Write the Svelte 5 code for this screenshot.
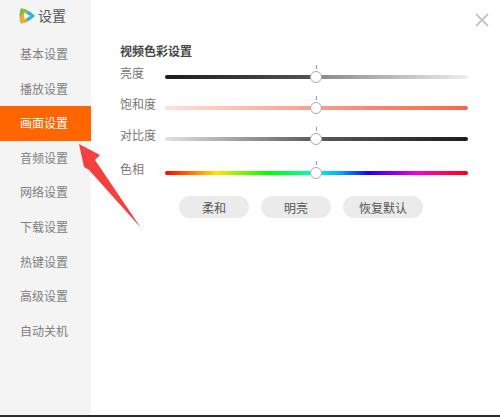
<script>
  const navItems = ['基本设置', '播放设置', '画面设置', '音频设置', '网络设置', '下载设置', '热键设置', '高级设置', '自动关机'];
  const activeItem = '画面设置';

  const sliders = [
    { label: '亮度', kind: 'brightness' },
    { label: '饱和度', kind: 'saturation' },
    { label: '对比度', kind: 'contrast' },
    { label: '色相', kind: 'hue' }
  ];

  const presets = ['柔和', '明亮', '恢复默认'];
</script>

<div class="window">
  <aside class="sidebar">
    <div class="brand">
      <svg class="logo" viewBox="0 0 16 16" width="16" height="16" aria-hidden="true">
        <path d="M2 .6 C.2 5 .2 11 2 15.4 C7 15 12.5 11.6 16 8 C12.5 4.4 7 1 2 .6 Z" fill="#2ab4f0" />
        <path d="M2 .6 C.2 5 .2 11 2 15.4 C4.2 15.2 6.4 14.4 8.4 13.4 C7.3 9.8 7.3 6.2 8.4 2.6 C6.4 1.6 4.2 .8 2 .6 Z" fill="#f7a823" />
        <path d="M2 .6 C1 3.2 .7 5.8 .8 8.4 L8.2 2.5 C6.4 1.5 4.2 .8 2 .6 Z" fill="#7cc242" />
        <path d="M5.2 4.8 L11.2 8 L5.2 11.2 Z" fill="#fff" />
      </svg>
      <span class="brand-name">设置</span>
    </div>
    <nav class="nav">
      {#each navItems as item}
        <div class="nav-item" class:active={item === activeItem}>{item}</div>
      {/each}
    </nav>
  </aside>

  <main class="content">
    <h2 class="title">视频色彩设置</h2>
    {#each sliders as slider}
      <div class="row {slider.kind}">
        <span class="label">{slider.label}</span>
        <div class="track">
          <span class="tick"></span>
          <span class="thumb"></span>
        </div>
      </div>
    {/each}
    <div class="presets">
      {#each presets as preset}
        <button class="preset">{preset}</button>
      {/each}
    </div>
  </main>

  <button class="close" aria-label="关闭">
    <svg viewBox="0 0 14 14" width="14" height="14" aria-hidden="true">
      <path d="M1 1 L13 13 M13 1 L1 13" stroke="#c4c4c4" stroke-width="1.8" fill="none" />
    </svg>
  </button>

  <svg class="arrow" viewBox="0 0 70 90" width="70" height="90" aria-hidden="true">
    <path d="M8 4 L29 15 L24 20 L70 88 L18 30 L13 27 Z" fill="#f5403f" />
  </svg>
</div>
<div class="taskbar"></div>

<style>
  :global(body) {
    margin: 0;
    background: #fff;
  }

  .window {
    position: relative;
    display: flex;
    height: 415px;
    font-family: "Liberation Sans", "Noto Sans CJK SC", sans-serif;
    overflow: hidden;
  }

  .taskbar {
    height: 2px;
    background: #2b2b30;
  }

  .sidebar {
    width: 91px;
    flex: none;
    background: #f4f4f4;
  }

  .brand {
    display: flex;
    align-items: center;
    gap: 3px;
    height: 32px;
    padding-left: 19px;
    font-size: 14px;
    color: #555;
  }

  .brand-name {
    margin-top: -2px;
  }

  .logo {
    flex: none;
  }

  .nav {
    padding-top: 5px;
  }

  .nav-item {
    height: 34.6px;
    line-height: 36px;
    padding-left: 20px;
    font-size: 12px;
    color: #808080;
  }

  .nav-item.active {
    background: #ff6600;
    color: #fff;
  }

  .content {
    flex: 1;
    padding: 45px 0 0 29px;
  }

  .title {
    margin: 0 0 1px;
    font-size: 12px;
    line-height: 14px;
    font-weight: 700;
    color: #444;
  }

  .row {
    display: flex;
    align-items: center;
    height: 31px;
    font-size: 12px;
    color: #777;
  }

  .row.hue {
    height: 37px;
  }

  .label {
    width: 45px;
    flex: none;
    margin-top: -7px;
  }

  .track {
    position: relative;
    width: 303px;
    height: 4px;
    margin-top: 3px;
    border-radius: 2px;
  }

  .brightness .track {
    background: linear-gradient(to right, #1c1c1c, #555 50%, #8a8a8a 51%, #ededed);
  }

  .saturation .track {
    background: linear-gradient(to right, #ffe0da, #ff9a88 50%, #ff6347);
  }

  .contrast .track {
    background: linear-gradient(to right, #e2e2e2, #5a5a5a 50%, #1c1c1c);
  }

  .hue .track {
    background: linear-gradient(to right, #ff0000, #ffe600 17%, #00ff00 34%, #00ffc8 50%, #00a8ff 58%, #1a00ff 67%, #ff00d0 84%, #ff0000);
  }

  .tick {
    position: absolute;
    left: 151px;
    top: -10px;
    width: 1px;
    height: 4px;
    background: #999;
  }

  .thumb {
    position: absolute;
    left: 145px;
    top: -4.5px;
    width: 10px;
    height: 10px;
    border: 1.5px solid #aaa;
    border-radius: 50%;
    background: #fff;
  }

  .presets {
    display: flex;
    gap: 12px;
    margin: 6px 0 0 59px;
  }

  .preset {
    height: 22px;
    min-width: 70px;
    padding: 0 16px;
    border: 0;
    border-radius: 11px;
    background: #ebebeb;
    font: inherit;
    font-size: 12px;
    color: #555;
  }

  .close {
    position: absolute;
    top: 13px;
    right: 11px;
    width: 14px;
    height: 14px;
    padding: 0;
    border: 0;
    background: none;
  }

  .close svg {
    display: block;
  }

  .arrow {
    position: absolute;
    left: 71px;
    top: 140px;
  }
</style>
